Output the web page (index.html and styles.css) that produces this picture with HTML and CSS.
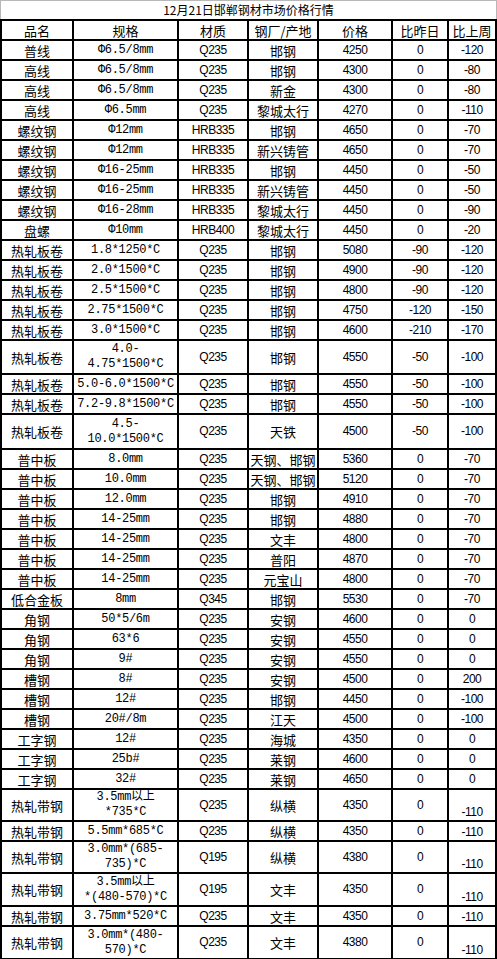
FILE: index.html
```html
<!DOCTYPE html>
<html lang="zh-CN">
<head>
<meta charset="utf-8">
<title>12月21日邯郸钢材市场价格行情</title>
<link rel="stylesheet" href="styles.css">
</head>
<body>
<div class="title">12月21日邯郸钢材市场价格行情</div>
<table class="prices">
<colgroup>
<col class="c-name"><col class="c-spec"><col class="c-mat"><col class="c-mill"><col class="c-price"><col class="c-day"><col class="c-week">
</colgroup>
<tbody>
<tr class="head"><td>品名</td><td>规格</td><td>材质</td><td>钢厂/产地</td><td>价格</td><td>比昨日</td><td>比上周</td></tr>
<tr><td>普线</td><td class="spec">Φ6.5/8mm</td><td class="num">Q235</td><td>邯钢</td><td class="num">4250</td><td class="num">0</td><td class="num">-120</td></tr>
<tr><td>高线</td><td class="spec">Φ6.5/8mm</td><td class="num">Q235</td><td>邯钢</td><td class="num">4300</td><td class="num">0</td><td class="num">-80</td></tr>
<tr><td>高线</td><td class="spec">Φ6.5/8mm</td><td class="num">Q235</td><td>新金</td><td class="num">4300</td><td class="num">0</td><td class="num">-80</td></tr>
<tr><td>高线</td><td class="spec">Φ6.5mm</td><td class="num">Q235</td><td>黎城太行</td><td class="num">4270</td><td class="num">0</td><td class="num">-110</td></tr>
<tr><td>螺纹钢</td><td class="spec">Φ12mm</td><td class="num">HRB335</td><td>邯钢</td><td class="num">4650</td><td class="num">0</td><td class="num">-70</td></tr>
<tr><td>螺纹钢</td><td class="spec">Φ12mm</td><td class="num">HRB335</td><td>新兴铸管</td><td class="num">4650</td><td class="num">0</td><td class="num">-70</td></tr>
<tr><td>螺纹钢</td><td class="spec">Φ16-25mm</td><td class="num">HRB335</td><td>邯钢</td><td class="num">4450</td><td class="num">0</td><td class="num">-50</td></tr>
<tr><td>螺纹钢</td><td class="spec">Φ16-25mm</td><td class="num">HRB335</td><td>新兴铸管</td><td class="num">4450</td><td class="num">0</td><td class="num">-50</td></tr>
<tr><td>螺纹钢</td><td class="spec">Φ16-28mm</td><td class="num">HRB335</td><td>黎城太行</td><td class="num">4450</td><td class="num">0</td><td class="num">-90</td></tr>
<tr><td>盘螺</td><td class="spec">Φ10mm</td><td class="num">HRB400</td><td>黎城太行</td><td class="num">4450</td><td class="num">0</td><td class="num">-20</td></tr>
<tr><td>热轧板卷</td><td class="spec">1.8*1250*C</td><td class="num">Q235</td><td>邯钢</td><td class="num">5080</td><td class="num">-90</td><td class="num">-120</td></tr>
<tr><td>热轧板卷</td><td class="spec">2.0*1500*C</td><td class="num">Q235</td><td>邯钢</td><td class="num">4900</td><td class="num">-90</td><td class="num">-120</td></tr>
<tr><td>热轧板卷</td><td class="spec">2.5*1500*C</td><td class="num">Q235</td><td>邯钢</td><td class="num">4800</td><td class="num">-90</td><td class="num">-120</td></tr>
<tr><td>热轧板卷</td><td class="spec">2.75*1500*C</td><td class="num">Q235</td><td>邯钢</td><td class="num">4750</td><td class="num">-120</td><td class="num">-150</td></tr>
<tr><td>热轧板卷</td><td class="spec">3.0*1500*C</td><td class="num">Q235</td><td>邯钢</td><td class="num">4600</td><td class="num">-210</td><td class="num">-170</td></tr>
<tr class="h34"><td>热轧板卷</td><td class="spec">4.0-<br>4.75*1500*C</td><td class="num">Q235</td><td>邯钢</td><td class="num">4550</td><td class="num">-50</td><td class="num">-100</td></tr>
<tr><td>热轧板卷</td><td class="spec">5.0-6.0*1500*C</td><td class="num">Q235</td><td>邯钢</td><td class="num">4550</td><td class="num">-50</td><td class="num">-100</td></tr>
<tr><td>热轧板卷</td><td class="spec">7.2-9.8*1500*C</td><td class="num">Q235</td><td>邯钢</td><td class="num">4550</td><td class="num">-50</td><td class="num">-100</td></tr>
<tr class="h35"><td>热轧板卷</td><td class="spec">4.5-<br>10.0*1500*C</td><td class="num">Q235</td><td>天铁</td><td class="num">4500</td><td class="num">-50</td><td class="num">-100</td></tr>
<tr><td>普中板</td><td class="spec">8.0mm</td><td class="num">Q235</td><td>天钢、邯钢</td><td class="num">5360</td><td class="num">0</td><td class="num">-70</td></tr>
<tr><td>普中板</td><td class="spec">10.0mm</td><td class="num">Q235</td><td>天钢、邯钢</td><td class="num">5120</td><td class="num">0</td><td class="num">-70</td></tr>
<tr><td>普中板</td><td class="spec">12.0mm</td><td class="num">Q235</td><td>邯钢</td><td class="num">4910</td><td class="num">0</td><td class="num">-70</td></tr>
<tr><td>普中板</td><td class="spec">14-25mm</td><td class="num">Q235</td><td>邯钢</td><td class="num">4880</td><td class="num">0</td><td class="num">-70</td></tr>
<tr><td>普中板</td><td class="spec">14-25mm</td><td class="num">Q235</td><td>文丰</td><td class="num">4800</td><td class="num">0</td><td class="num">-70</td></tr>
<tr><td>普中板</td><td class="spec">14-25mm</td><td class="num">Q235</td><td>普阳</td><td class="num">4870</td><td class="num">0</td><td class="num">-70</td></tr>
<tr><td>普中板</td><td class="spec">14-25mm</td><td class="num">Q235</td><td>元宝山</td><td class="num">4800</td><td class="num">0</td><td class="num">-70</td></tr>
<tr><td>低合金板</td><td class="spec">8mm</td><td class="num">Q345</td><td>邯钢</td><td class="num">5530</td><td class="num">0</td><td class="num">-70</td></tr>
<tr><td>角钢</td><td class="spec">50*5/6m</td><td class="num">Q235</td><td>安钢</td><td class="num">4600</td><td class="num">0</td><td class="num">0</td></tr>
<tr><td>角钢</td><td class="spec">63*6</td><td class="num">Q235</td><td>安钢</td><td class="num">4550</td><td class="num">0</td><td class="num">0</td></tr>
<tr><td>角钢</td><td class="spec">9#</td><td class="num">Q235</td><td>安钢</td><td class="num">4550</td><td class="num">0</td><td class="num">0</td></tr>
<tr><td>槽钢</td><td class="spec">8#</td><td class="num">Q235</td><td>安钢</td><td class="num">4500</td><td class="num">0</td><td class="num">200</td></tr>
<tr><td>槽钢</td><td class="spec">12#</td><td class="num">Q235</td><td>邯钢</td><td class="num">4450</td><td class="num">0</td><td class="num">-100</td></tr>
<tr><td>槽钢</td><td class="spec">20#/8m</td><td class="num">Q235</td><td>江天</td><td class="num">4500</td><td class="num">0</td><td class="num">-100</td></tr>
<tr><td>工字钢</td><td class="spec">12#</td><td class="num">Q235</td><td>海城</td><td class="num">4350</td><td class="num">0</td><td class="num">0</td></tr>
<tr><td>工字钢</td><td class="spec">25b#</td><td class="num">Q235</td><td>莱钢</td><td class="num">4600</td><td class="num">0</td><td class="num">0</td></tr>
<tr><td>工字钢</td><td class="spec">32#</td><td class="num">Q235</td><td>莱钢</td><td class="num">4650</td><td class="num">0</td><td class="num">0</td></tr>
<tr class="h32"><td>热轧带钢</td><td class="spec">3.5mm以上<br>*735*C</td><td class="num">Q235</td><td>纵横</td><td class="num">4350</td><td class="num">0</td><td class="num low">-110</td></tr>
<tr><td>热轧带钢</td><td class="spec">5.5mm*685*C</td><td class="num">Q235</td><td>纵横</td><td class="num">4350</td><td class="num">0</td><td class="num low">-110</td></tr>
<tr class="h32"><td>热轧带钢</td><td class="spec">3.0mm*(685-<br>735)*C</td><td class="num">Q195</td><td>纵横</td><td class="num">4380</td><td class="num">0</td><td class="num low">-110</td></tr>
<tr class="h33"><td>热轧带钢</td><td class="spec">3.5mm以上<br>*(480-570)*C</td><td class="num">Q195</td><td>文丰</td><td class="num">4350</td><td class="num">0</td><td class="num low">-110</td></tr>
<tr><td>热轧带钢</td><td class="spec">3.75mm*520*C</td><td class="num">Q235</td><td>文丰</td><td class="num">4350</td><td class="num">0</td><td class="num low">-110</td></tr>
<tr class="h33"><td>热轧带钢</td><td class="spec">3.0mm*(480-<br>570)*C</td><td class="num">Q235</td><td>文丰</td><td class="num">4380</td><td class="num">0</td><td class="num low">-110</td></tr>
</tbody>
</table>
</body>
</html>
```
FILE: styles.css
```css
html, body {
  margin: 0;
  padding: 0;
  background: #ffffff;
}

.title {
  box-sizing: border-box;
  width: 497px;
  height: 19px;
  border: 1px solid #b8b8b8;
  border-bottom: none;
  font-family: "Noto Sans CJK SC", sans-serif;
  font-size: 12px;
  line-height: 18px;
  text-align: center;
  color: #000;
}

.prices {
  border-collapse: collapse;
  table-layout: fixed;
  width: 495px;
}

.c-name { width: 72px; }
.c-spec { width: 105px; }
.c-mat { width: 70px; }
.c-mill { width: 70px; }
.c-price { width: 74px; }
.c-day { width: 56px; }
.c-week { width: 48px; }

.prices tr { height: 20px; }
.prices tr.h32 { height: 32px; }
.prices tr.h33 { height: 33px; }
.prices tr.h34 { height: 34px; }
.prices tr.h35 { height: 35px; }

.prices td {
  border: 2px solid #000;
  padding: 0;
  text-align: center;
  vertical-align: middle;
  white-space: nowrap;
  overflow: hidden;
  font-family: "Noto Sans CJK SC", sans-serif;
  font-size: 13px;
  line-height: 15px;
  color: #000;
}

.prices td.spec {
  font-family: "Liberation Mono", "Noto Sans CJK SC", monospace;
  font-size: 12px;
  letter-spacing: -0.3px;
}

.prices td.num {
  font-family: "Liberation Sans", "Noto Sans CJK SC", sans-serif;
  font-size: 12px;
  letter-spacing: -0.5px;
}

.prices td.low {
  vertical-align: bottom;
}
```
